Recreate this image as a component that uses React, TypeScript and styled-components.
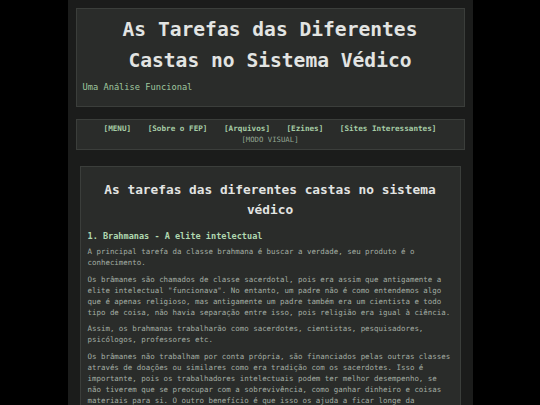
import React from 'react';
import styled, { createGlobalStyle } from 'styled-components';

const NAV_LINKS = ['[MENU]', '[Sobre o FEP]', '[Arquivos]', '[Ezines]', '[Sites Interessantes]'];

const PARAGRAPHS = [
  'A principal tarefa da classe brahmana é buscar a verdade, seu produto é o conhecimento.',
  'Os brâmanes são chamados de classe sacerdotal, pois era assim que antigamente a elite intelectual "funcionava". No entanto, um padre não é como entendemos algo que é apenas religioso, mas antigamente um padre também era um cientista e todo tipo de coisa, não havia separação entre isso, pois religião era igual à ciência.',
  'Assim, os brahmanas trabalharão como sacerdotes, cientistas, pesquisadores, psicólogos, professores etc.',
  'Os brâmanes não trabalham por conta própria, são financiados pelas outras classes através de doações ou similares como era tradição com os sacerdotes. Isso é importante, pois os trabalhadores intelectuais podem ter melhor desempenho, se não tiverem que se preocupar com a sobrevivência, como ganhar dinheiro e coisas materiais para si. O outro benefício é que isso os ajuda a ficar longe da tentação do dinheiro e do poder, mantendo-os focados na busca da verdade.',
];

const App: React.FC = () => {
  return (
    <>
      <GlobalStyle />
      <Page>
        <Header>
          <Title>As Tarefas das Diferentes Castas no Sistema Védico</Title>
          <Subtitle>Uma Análise Funcional</Subtitle>
        </Header>

        <Nav>
          <NavLinks>
            {NAV_LINKS.map((link) => (
              <NavLink key={link} href="#">{link}</NavLink>
            ))}
          </NavLinks>
          <VisualMode href="#">[MODO VISUAL]</VisualMode>
        </Nav>

        <Article>
          <ArticleTitle>As tarefas das diferentes castas no sistema védico</ArticleTitle>
          <SectionTitle>1. Brahmanas - A elite intelectual</SectionTitle>
          {PARAGRAPHS.map((text, i) => (
            <Paragraph key={i}>{text}</Paragraph>
          ))}
        </Article>
      </Page>
    </>
  );
};

const GlobalStyle = createGlobalStyle`
  html, body {
    margin: 0;
    padding: 0;
    background: #000;
    font-family: "DejaVu Sans Mono", "Liberation Mono", monospace;
  }
`;

const Page = styled.div`
  width: 405px;
  margin: 0 auto;
  padding: 8px 8px 24px;
  box-sizing: border-box;
  min-height: 405px;
  background: #1b1c1b;
  display: flex;
  flex-direction: column;
`;

const Header = styled.header`
  background: #2a2c2a;
  border: 1px solid #3b3e3b;
  padding: 5px 6px 12px;
  margin-bottom: 12px;
`;

const Title = styled.h1`
  margin: 0;
  padding: 0 10px;
  text-align: center;
  font-size: 19.6px;
  line-height: 31px;
  font-weight: bold;
  color: #e2e4e2;
`;

const Subtitle = styled.p`
  margin: 5px 0 0;
  font-size: 8.7px;
  line-height: 13px;
  color: #9fc79f;
`;

const Nav = styled.nav`
  background: #2a2c2a;
  border: 1px solid #3b3e3b;
  padding: 3px 6px 4px;
  margin-bottom: 16px;
  display: flex;
  flex-direction: column;
  align-items: center;
`;

const NavLinks = styled.div`
  display: flex;
  gap: 16.5px;
  justify-content: center;
`;

const NavLink = styled.a`
  font-size: 7.65px;
  line-height: 11px;
  font-weight: bold;
  color: #a6cca6;
  text-decoration: none;
`;

const VisualMode = styled.a`
  font-size: 7.3px;
  line-height: 11px;
  color: #93a693;
  text-decoration: none;
`;

const Article = styled.article`
  margin: 0 4px;
  background: #2a2c2a;
  border: 1px solid #3b3e3b;
  padding: 13px 7px 12px;
`;

const ArticleTitle = styled.h2`
  margin: 0 0 10px;
  text-align: center;
  font-size: 12.8px;
  line-height: 20px;
  font-weight: bold;
  color: #e2e4e2;
`;

const SectionTitle = styled.h3`
  margin: 0 0 4px;
  font-size: 8.55px;
  line-height: 13px;
  font-weight: bold;
  color: #b0d8b0;
`;

const Paragraph = styled.p`
  margin: 0 0 6px;
  font-size: 7.44px;
  line-height: 10.9px;
  color: #a3ada3;
`;

export default App;
